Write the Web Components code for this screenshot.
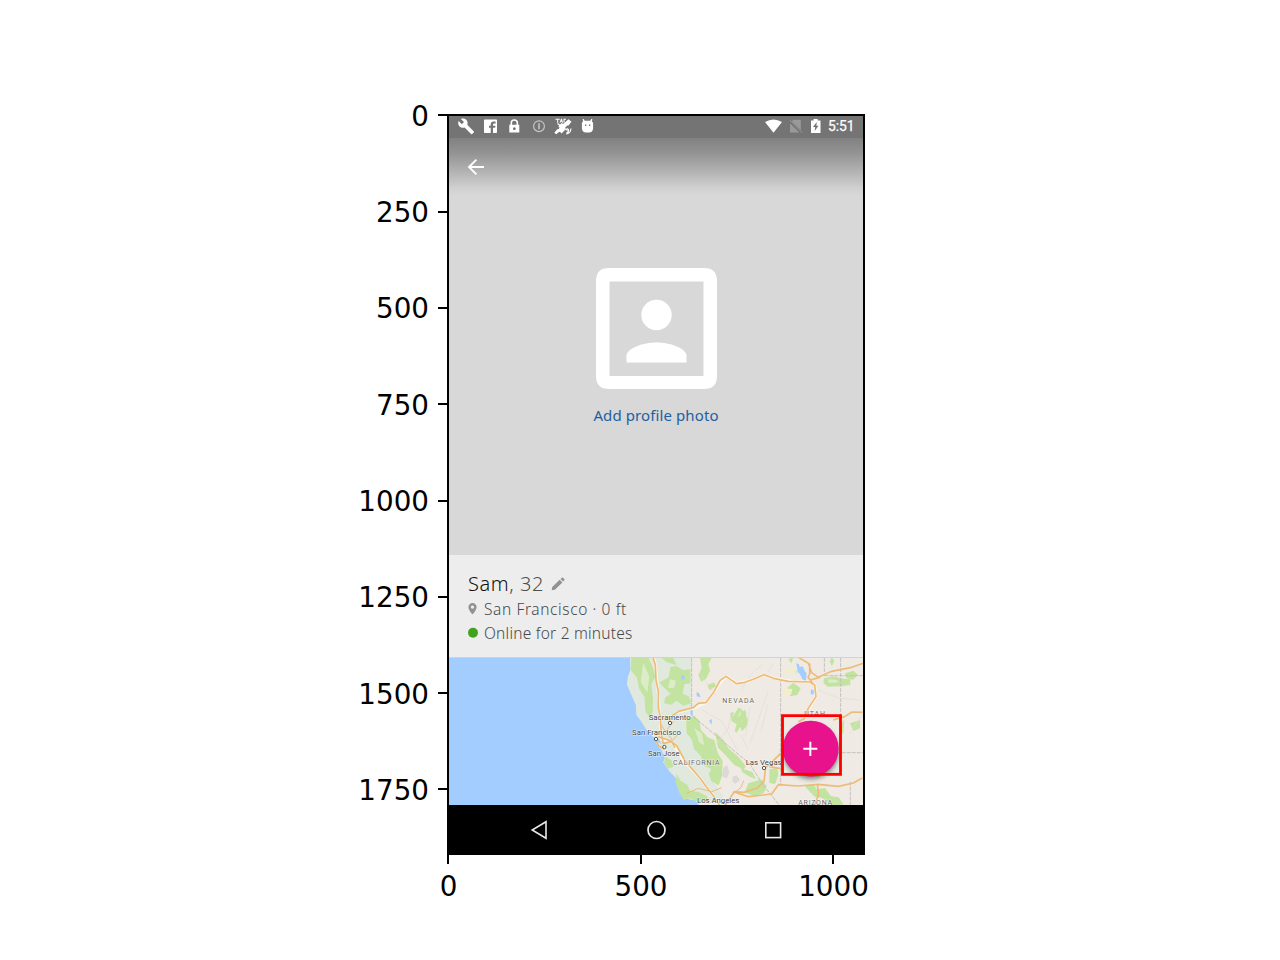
<!DOCTYPE html>
<html lang="en"><head><meta charset="utf-8"><title>Profile screen plot</title>
<style>html,body{margin:0;background:#fff}body{width:1280px;height:960px;overflow:hidden}</style></head>
<body>
<plot-figure>
  <plot-axis slot="y" dir="y" ticks="0,250,500,750,1000,1250,1500,1750"></plot-axis>
  <phone-screen>
    <status-bar></status-bar>
    <photo-area>Add profile photo</photo-area>
    <profile-info></profile-info>
    <area-map></area-map>
    <nav-bar></nav-bar>
  </phone-screen>
  <plot-axis slot="x" dir="x" ticks="0,500,1000"></plot-axis>
</plot-figure>
<script>
function define(name, html, setup){
  const t=document.createElement('template');t.innerHTML=html;
  customElements.define(name,class extends HTMLElement{
    constructor(){super();this.attachShadow({mode:'open'}).append(t.content.cloneNode(true));}
    connectedCallback(){if(setup)setup(this);}
  });
}
define('plot-figure',`<style>
:host{display:grid;grid-template-columns:447px 418px;grid-template-rows:741px 60px;padding-top:114px;width:1280px;box-sizing:border-box}
.x{grid-column:2}</style>
<slot name="y"></slot><slot></slot><div class="x"><slot name="x"></slot></div>`);

define('plot-axis',`<style>
:host{display:flex;font:27.78px/32px "DejaVu Sans",sans-serif;color:#000}
:host([dir=y]){flex-direction:column;margin-top:-46.8px;height:770px;align-items:stretch}
:host([dir=x]){margin-left:-95.25px;width:577.5px}
.t{display:flex;align-items:center;flex:none}
i{display:block;background:#000}
:host([dir=y]) .t{height:96.3px;justify-content:flex-end;gap:9px}
:host([dir=y]) i{width:9px;height:2px}
:host([dir=x]) .t{width:192.5px;flex-direction:column;gap:7px}
:host([dir=x]) i{width:2px;height:9px}
:host([dir=y]) span{padding-top:3px}
:host([dir=x]) span{padding-left:1px}
</style>`,el=>{
  for(const v of el.getAttribute('ticks').split(',')){
    const d=document.createElement('div');d.className='t';
    const s=document.createElement('span');s.textContent=v;
    const i=document.createElement('i');
    el.getAttribute('dir')==='y'?d.append(s,i):d.append(i,s);
    el.shadowRoot.append(d);
  }
});

define('phone-screen',`<style>:host{display:flex;flex-direction:column;box-sizing:border-box;width:418px;height:741px;border:2px solid #000;border-bottom:0;background:#d8d8d8;overflow:hidden}</style><slot></slot>`);

define('status-bar',`<style>
:host{display:flex;flex:none;height:22px;background:#747474}
svg{display:block}</style>
<svg width="414" height="22" viewBox="449 116 414 22" fill="#fff">
<path transform="translate(457.5 117.7) scale(.72)" d="M22.7 19l-9.1-9.1c.9-2.3.4-5-1.5-6.9-2-2-5-2.4-7.4-1.3L9 6 6 9 1.6 4.7C.4 7.1.9 10.1 2.9 12.1c1.9 1.9 4.6 2.4 6.9 1.5l9.1 9.1c.4.4 1 .4 1.4 0l2.3-2.3c.5-.4.5-1.1.1-1.4z"/>
<path fill-rule="evenodd" d="M484.7 119.5q-.7 0-.7.7v12q0 .7.700.7h6v-5.100h-1.700v-2h1.700v-1.400q0-2.900 2.900-2.900h2v2h-1.300q-1.300 0-1.300 1.200v1.100h2.500l-.4 2h-2.100v5.100h3.300q.7 0 .7-.7v-12q0-.7-.7-.7z"/>
<path fill-rule="evenodd" d="M509.300 124.700h1.200v-2q0-3.500 3.800-3.500t3.800 3.500v2h1.200v7.900h-10zm2.800 0h4.400v-2q0-2-2.200-2t-2.200 2zm2.200 2.600a1.400 1.400 0 1 0 .1 0z"/>
<g fill="none" stroke="#c4c4c4" stroke-width="1.200"><circle cx="539" cy="126.200" r="5.400"/><path stroke-width="1.600" d="M539 123.200v6"/></g>
<path d="M555.500 118.700h4.200v1h-1.500v3h-1v-3h-1.700zM559.500 122.700l1.500-4h1l1 4h-.9l-.3-1h-1l-.3 1zM563.500 118.700h2.500v1h-1.500v3h-1zM568.500 119.200l3 2.500-3 3.800-1.300 0-2.700 2.900.5 1.600-3.500 3.500-1.500-1.800-1.500.5-2.200 2.100-2-1.500 3-3.500 1.500-.3.700-1.500-1.200-1.200 3.400-3.300 1.600.9 2.700-2.500z"/>
<path fill="none" stroke="#fff" stroke-width="1.200" d="M557.500 123.500l10 7M566.500 132.500a2 2 0 1 0 .1-4M566 134q4.500-.5 5-5.500"/>
<path fill-rule="evenodd" d="M583 121.700l-.3-2.700h1l1 1.700h5.600l1-1.700h1l-.3 2.700q1.100.3 1.100 1.500v5.300q-.5 4-4 4h-3.200q-3.500 0-4-4v-5.300q0-1.200 1.100-1.500zM585 124.600v1.300h1.300v-1.300zm4 0v1.300h1.300v-1.300z"/>
<path d="M765 122.100q8.500-5.400 17 0l-8.500 10.700z"/>
<path fill="#999" d="M793.300 119.800h7.500v10.200l-9-8.700zM790 123.300v9.200h9.300z"/><path stroke="#999" d="M789.500 119.700l12.500 12.800"/>
<path fill-rule="evenodd" d="M811 120.400h2.500V119h4.200v1.400h2.800V133H811zm5.700 1.600l-3.700 5h2.200l-.5 4 3.800-5.300h-2.100z"/>
<text x="828" y="131.400" font-size="13.800" font-weight="400" stroke="#fff" stroke-width=".25" textLength="26.500" font-family="Roboto,sans-serif">5:51</text></svg>`);

define('photo-area',`<style>
:host{display:flex;flex:none;flex-direction:column;height:417px;background:linear-gradient(#818181 0,#939393 15px,#b5b5b5 35px,#d0d0d0 50px,#d8d8d8 58px)}
.back{display:block;margin:20px 0 0 18px}
.portrait{display:block;margin:92px 0 0 146.500px}
p{margin:13px 0 0;align-self:center;color:#1d60a0;font:15px/26px "Noto Sans",sans-serif;letter-spacing:.1px;white-space:nowrap}</style>
<svg class="back" width="18" height="18" viewBox="0 0 18 18" fill="none" stroke="#fff" stroke-width="1.900"><path d="M17 9H2M9.400 1.600L2 9l7.400 7.400"/></svg>
<svg class="portrait" width="121" height="121" viewBox="0 0 121 121" fill="#fff"><path fill-rule="evenodd" d="M13 0h95q13 0 13 13v95q0 13-13 13H13q-13 0-13-13V13Q0 0 13 0zM13.500 13.500v94.500h94V13.500z"/><circle cx="60.500" cy="47" r="15.200"/><path d="M30.500 94.500V87C32 80 47 74.500 60.500 74.500S89 80 90.500 87v7.500z"/></svg>
<p><slot></slot></p>`);

define('profile-info',`<style>
:host{display:block;flex:none;box-sizing:border-box;height:103px;background:#ededed;border-bottom:1px solid #d2d2d2;padding:15px 0 0 19px;font:15.500px/24px "Noto Sans",sans-serif;font-weight:300;color:#484848;white-space:nowrap}
div{display:flex;align-items:center;height:24px}
.n{font-size:20px;height:27px;color:#505050}b{font-weight:300;color:#111}.pencil{margin-left:7px}
.l{gap:6px}.o{height:23px}svg{flex:none}</style>
<div class="n"><span id="name"><b>Sam</b>, 32</span><svg class="pencil" width="14" height="14" viewBox="0 0 14 14" fill="#929292"><path d="M.7 13.200l.5-3.100 7.500-7.400 2.700 2.700-7.500 7.300zM9.500 2l1.300-1.200q.6-.4 1.100 0l1.400 1.300q.5.500 0 1.100l-1.200 1.400z"/></svg></div>
<div class="l"><svg width="10" height="14" viewBox="0 0 10 14"><path fill="#929292" fill-rule="evenodd" d="M4.500 1A4 4 0 0 0 .4 5c0 3 4.100 7.500 4.100 7.500S8.600 8 8.600 5a4 4 0 0 0-4.100-4zm0 2.500a1.600 1.600 0 1 1-.1 0z"/></svg><span id="place">San Francisco · 0 ft</span></div>
<div class="l o"><svg width="10" height="12" viewBox="0 0 10 12"><circle cx="5" cy="5.700" r="5" fill="#40a31c"/></svg><span id="on">Online for 2 minutes</span></div>`,el=>{
  // Spread the letters so that each line takes its designed width.
  for(const [id,w] of [['name',76],['place',143],['on',148.5]]){
    const s=el.shadowRoot.getElementById(id);
    s.style.letterSpacing=((w-s.getBoundingClientRect().width)/s.textContent.length)+'px';
  }
});

define('area-map',`<style>:host{display:block;flex:none;height:147px;overflow:hidden}svg{display:block}</style>
<svg width="414" height="147" viewBox="-513 24 1242 441" preserveAspectRatio="none">
<defs><filter id="soft" x="-5%" y="-5%" width="110%" height="110%"><feGaussianBlur stdDeviation="1"/></filter>
<filter id="sh" x="-30%" y="-30%" width="160%" height="170%"><feGaussianBlur stdDeviation="6"/></filter></defs>
<rect x="-513" y="22" width="1242" height="444" fill="#a3ccff"/>
<g filter="url(#soft)">
<path fill="#efebe4" d="M30 15L32 60 24 80 22 105 35 135 48 165 50 195 65 215 80 240 102 262 112 285 125 300 135 325 130 337 150 365 165 380 180 400 188 425 190 445 225 450 250 480H740V15z"/>
<path fill="#e1e8de" d="M30 15L32 60 24 80 22 105 35 135 48 165 50 195 65 215 80 240 102 262 112 285 125 300 135 325 130 337 150 365 165 380 180 400 188 425 190 445 225 450 300 466 310 440 285 400 275 350 225 280 195 215 215 170V15z"/>
<g fill="#c3e3a0">
<path d="M34 24l52 0 12 28 8 28-12 22 5 45-1 37-8 20-14-20-2-42-16-25-8-36-18-20z"/>
<path d="M125 24h35l10 22-30-10zM118 98l28-16 5-30 18-4 20 12 22-2v42l-18 3-5 28 18 8 8 20-24 8-20-15-16 12-22-4 4-18 16-10z"/>
<path d="M240 24h35l-10 18 5 20-12 25-15 8-8-20 10-20zM262 105l20-8 6 12-20 12z"/>
<path d="M198 205l25-8 15 15 5 28 20 22 20 8 10 38 15 25-2 45-10 28-22-12-8-22 8-15-22-10-10-30-20-20-6-28-16-20z"/>
<path d="M285 245l25 25 15 25 30 25 22 28-5 10-28-12-25-28-25-25z"/>
<path d="M330 190l12-5-5 18 18-30 8 2-8 26 20-22 4 10-16 26 22-10-5 24-14 15-6-14-10 18-6-4 6-22-15-8z"/>
<path d="M136 320l18 10 6 20-16 6-12-18zM170 372l12 20 20 12 8 18 26 4 24 12 8 18-28 4-30-15-20 4-13-22-10-30z"/>
<path d="M505 28l15-8-5 20zM520 98l-18 16 8 25 22-4 10-20zM612 85l28-6 35 8 16 0v18l-30 4-38 1-13-12z"/>
<path d="M360 175l18 15 5 30-20-10zM360 348l12 10 25 8 12 22-20-8-22-13zM385 400l40-12 15 20-8 20-25 10-33-10zM448 358l24-5 3 22-10 28-17-5zM555 410l25-8 10 16 25-4 18 25 23 3 15 22-36 1-30-22-20-2-20-20zM675 70l25-8 14 12-15 15-20-5zM690 220l30-10v25l-20 8zM365 200l16 3-4 22-10-6z"/>
<path d="M560 360l26-5 24 12-12 15-32-3zM635 22l8 10-7 17-7-14zM665 220l8-12-3 40-12 15z"/>
</g>
<g fill="#dcecc9"><path d="M70 38l18 42-6 48-20-32zM150 88l18 4-6 22-18 0zM223 234l22 16 8 36-15-8zM520 62l18-2-6 12zM625 88l28 2v8h-28z"/></g>
<path fill="#f3edcd" d="M495 54l24-1 5 16-25 4zM492 115l25 2-4 18-22 0z"/>
<g fill="#dcd9d6"><path d="M310 352l12-6 6 22-8 18-14-8zM338 380l12-4 10 14-14 12-9-8z"/></g>
<g fill="#a3ccff"><path d="M529 40l8 3 2 9 8-4 8 16 5 6-2 24-10-5-8-16-7-8zM573 118l10 4-4 13-7-4zM230 125l7 5 5 12-12-3zM183 77l8-2 4 12-10 2zM211 180l6 0 2 14-8 0zM268 210l8-2-1 14-5-2zM104 266l8 10 13 6-8-15z"/></g>
<g fill="none" stroke="#c4c1be" stroke-width="3"><path stroke-dasharray="12 3" d="M215 24V196L390 342M390 342L428 404 450 430 478 466M482 24V402M613 24V70M662 24V310M575 308H729M613 77H729M691 395V466"/></g>
<g fill="none" stroke="#e0dbd6" stroke-width="2"><path d="M247 180l60 35 44 85M365 120q22-50 62-75M390 280l30-85 25-75M423 245l20-82M445 65l15-27M275 300l50-65 8-44M390 170l-14 90M240 70l45 65M385 300l-22-45M690 250l38-58M594 120l65 25 60 5"/></g>
<g fill="none" stroke="#fff7e8" stroke-width="8" stroke-linejoin="round"><path d="M102 24L107 45 112 105 117 160 121 225 125 270 155 277 193 335 242 387 278 436 305 466M165 190L220 175 257 158 306 93 318 79 352 100 400 88 430 75 462 85 520 94 572 96 585 105 588 140 565 180"/></g>
<g fill="none" stroke="#edbb78" stroke-width="5" stroke-linejoin="round">
<path d="M97 15L106 45 108 90 115 125 115 170 121 205 124 255 130 280 153 275 170 287 195 333 218 359 242 387 260 412 280 438 300 466"/>
<path d="M147 215L160 195 176 184 220 173 235 160 257 158 282 125 300 92 318 79 350 101 370 98 400 88 432 74 460 85 505 94 570 96 584 105 588 140 565 175 555 198"/>
<path d="M535 22l30 18 10 28 20 14 40-18 60-12 35-12M569 40l0 32-5 10 14 18M570 90l30-8M555 205l-20 10M640 210l34-10 22-14 32 1M104 264l12 24 17 9M115 260l40 14 10 20"/>
<path d="M482 310l-25 25-20 17-5 42-20 20-40 13-29-2-28 42M340 425l45 15 70-8 20-28 60 4 60-5 60 6 45-10 27-15M592 402l4 30-12 34M448 350l35 6"/>
<path stroke-width="3" d="M137 245l15-20 10-12M120 220l10 15 28 36 16-18M200 430l35-15 40 10 30-12M345 427l18-15 8-20"/>
</g>
</g>
<g font-family="Roboto,sans-serif" fill="#444" stroke="#fff" stroke-opacity=".75" stroke-width="3" paint-order="stroke" font-size="23.500">
<text x="86" y="209" textLength="126">Sacramento</text><text x="36" y="256" textLength="147">San Francisco</text><text x="84" y="318" textLength="95">San Jose</text><text x="377" y="344" textLength="108">Las Vegas</text><text x="231" y="459" textLength="127">Los Angeles</text>
<g fill="#666" font-size="21"><text x="307" y="158" textLength="95">NEVADA</text><text x="159" y="345" textLength="140">CALIFORNIA</text><text x="553" y="199" textLength="62">UTAH</text><text x="535" y="464" textLength="101">ARIZONA</text></g></g>
<g fill="#fff" stroke="#555" stroke-width="3"><circle cx="150" cy="219" r="5"/><circle cx="108" cy="267" r="5"/><circle cx="133" cy="291" r="5"/><circle cx="432" cy="354" r="5"/></g>
<circle cx="573" cy="305" r="83" fill="#222" opacity=".5" filter="url(#sh)"/>
<circle cx="572" cy="296" r="84" fill="#e8128c"/><path d="M550 296h42M571 275v43" stroke="#fff" stroke-width="6"/>
<rect x="487.500" y="197" width="174" height="176" fill="none" stroke="#f00" stroke-width="8.500"/>
</svg>`);

define('nav-bar',`<style>:host{display:flex;flex:1;align-items:center;justify-content:space-between;background:#000;padding:0 80px 0 81px}svg{display:block}</style>
<svg width="20" height="20" viewBox="0 0 20 20" fill="none" stroke="#e8e8e8" stroke-width="1.600"><path d="M16 1.700v16.600L2.200 10z"/></svg>
<svg width="20" height="20" viewBox="0 0 20 20" fill="none" stroke="#e8e8e8" stroke-width="1.700"><circle cx="9.500" cy="10" r="8.500"/></svg>
<svg width="20" height="20" viewBox="0 0 20 20" fill="none" stroke="#e8e8e8" stroke-width="1.600"><rect x="2.800" y="2.800" width="14.800" height="14.800"/></svg>`);
</script></body></html>
